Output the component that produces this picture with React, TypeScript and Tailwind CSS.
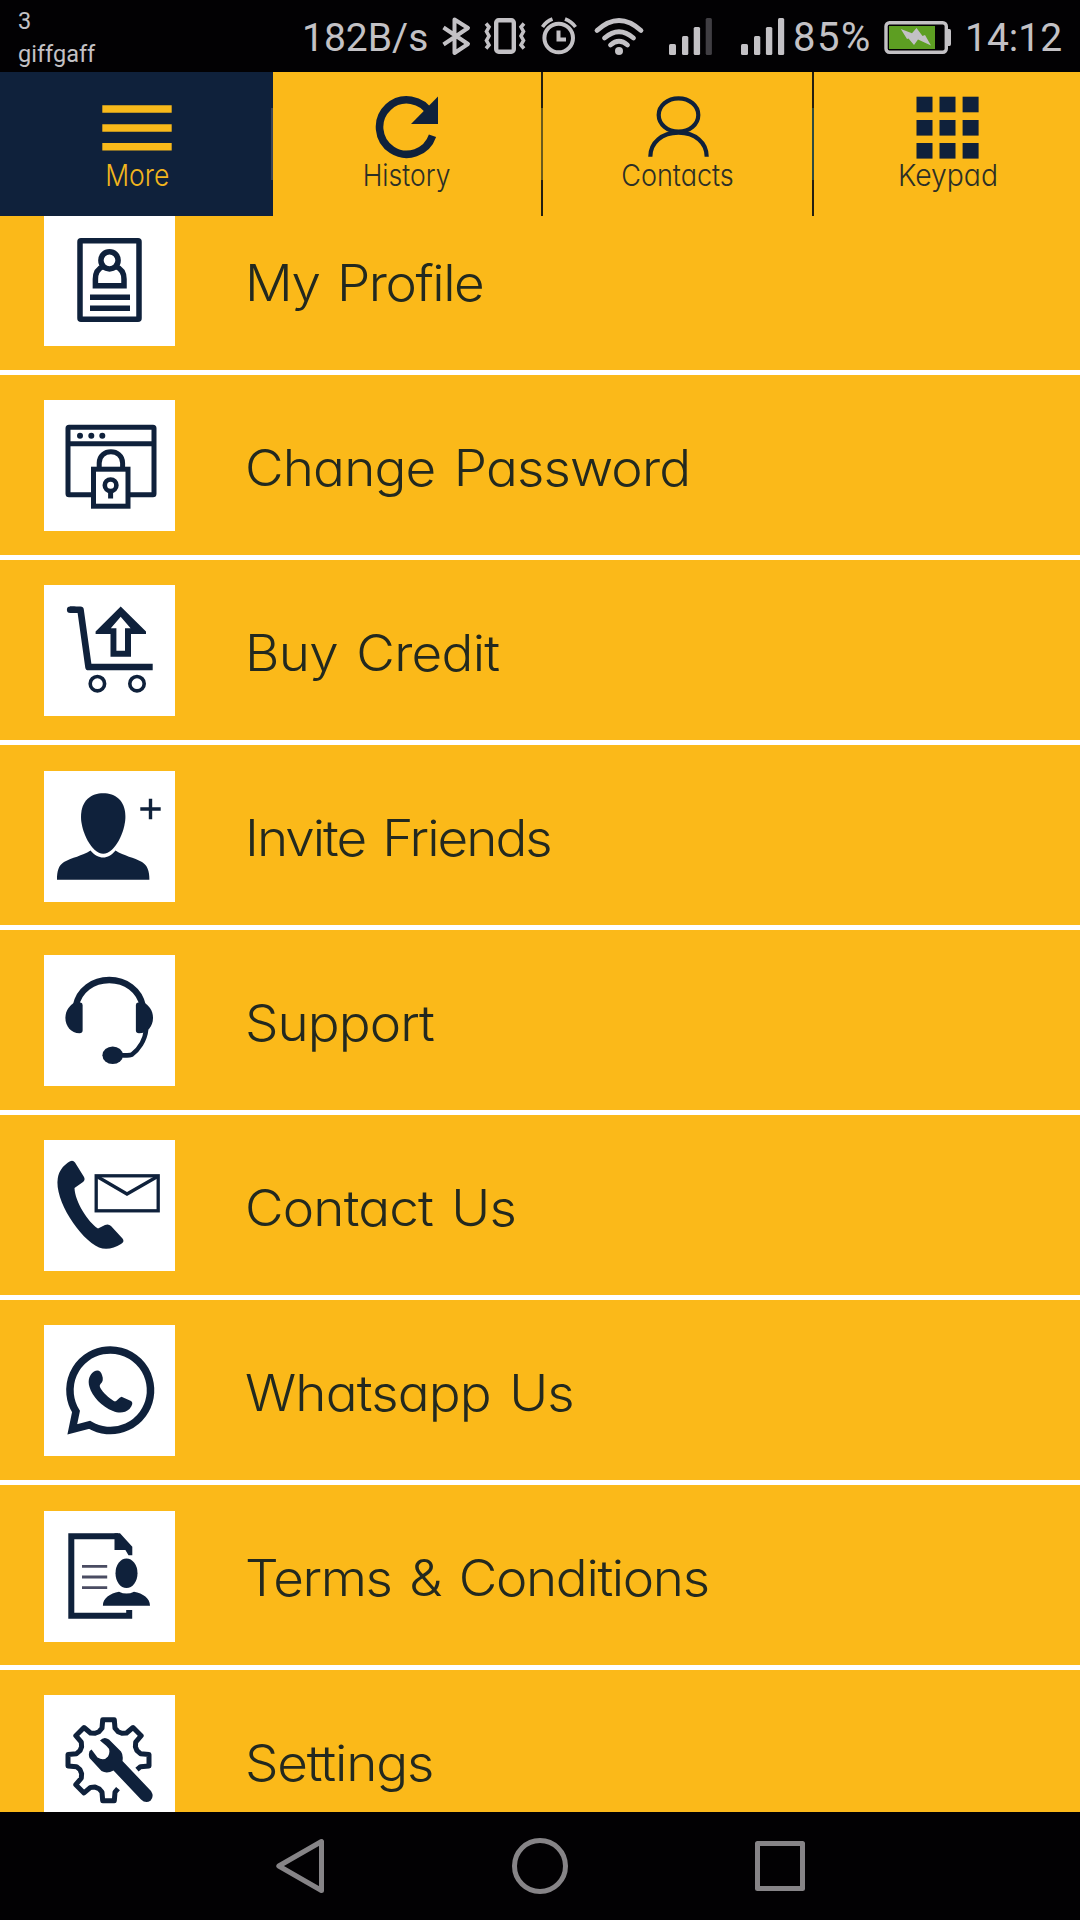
import type { ReactNode } from "react";

const NAVY = "#0f213b";

// Gear outline: one tooth is missing at 45° where the wrench handle goes through
const GEAR_TEETH = [90, 135, 180, 225, 270, 315, 360];
const TOOTH = [[28.5, -9.5], [32, -6.5], [40.5, -5.8], [40.5, 5.8], [32, 6.5], [28.5, 9.5]];
const GEAR_POINTS = GEAR_TEETH.flatMap((deg) => {
    const a = (deg * Math.PI) / 180;
    return TOOTH.map(([x, y]) =>
        `${(64.5 + x * Math.cos(a) - y * Math.sin(a)).toFixed(1)},${(65.2 + x * Math.sin(a) + y * Math.cos(a)).toFixed(1)}`
    );
}).join(" ");

const ICONS: Record<string, ReactNode> = {
    profile: (
        <g fill="none" stroke={NAVY} strokeWidth="5.5">
            <rect x="36" y="25.8" width="59" height="78.5" rx="1"/>
            <circle cx="65.5" cy="45.3" r="8.6"/>
            <path d="M59 51.5C53 54 51.4 58 51.4 64V70.8H80V64C80 58 78 54 72 51.5"/>
            <path d="M46 82.2H86M46 93.2H86"/>
        </g>
    ),
    password: (
        <g fill="none" stroke={NAVY} strokeWidth="5">
            <rect x="24" y="27.2" width="86" height="67.6" rx="1"/>
            <path d="M24 43.7H110"/>
            <g fill={NAVY} stroke="none">
                <circle cx="36" cy="35.7" r="3"/>
                <circle cx="47.3" cy="35.7" r="3"/>
                <circle cx="58.3" cy="35.7" r="3"/>
            </g>
            <rect x="49.5" y="69.2" width="34.5" height="37" fill="white"/>
            <path d="M55.2 68V63C55.2 48 78.6 48 78.6 63V68"/>
            <circle cx="66.6" cy="85.3" r="5.8" strokeWidth="4.6"/>
            <path d="M66.6 90V98.5"/>
        </g>
    ),
    cart: (
        <g fill="none" stroke={NAVY} strokeLinejoin="round">
            <path d="M26 24.8H36.5L44.5 82H108.7" strokeWidth="6.6"/>
            <path d="M26.2 24.8H30" strokeWidth="6.6" strokeLinecap="round"/>
            <circle cx="53.4" cy="98.7" r="7.2" strokeWidth="3.6"/>
            <circle cx="93" cy="98.7" r="7.2" strokeWidth="3.6"/>
            <path fill={NAVY} stroke="none" d="M76.7 21.5L102 46.5V49H87V71.7H66.5V49H51.6V46.5Z"/>
            <path fill="white" stroke="none" d="M76.7 31.8L86.6 43.2H81V65.7H72.4V43.2H66.8Z"/>
        </g>
    ),
    invite: (
        <g fill={NAVY}>
            <path d="M59.2 22.3C71 22.3 81.4 29 81.4 46C81.4 60 71 82.8 59.2 82.8S37 60 37 46C37 29 47.5 22.3 59.2 22.3Z"/>
            <path d="M46.5 79.5C50 84 55 86.6 59.2 86.6S68 84 71.5 79.5C80 85 90 86.5 98 91C103.5 94.5 105.4 100 105.4 108.7H13C13 100 14.5 94.5 20 91C28 86.5 38 85 46.5 79.5Z"/>
            <path d="M96.3 38H116.7M106.5 27.8V48.2" stroke={NAVY} strokeWidth="3.4"/>
        </g>
    ),
    support: (
        <g fill={NAVY}>
            <path d="M31.8 51C35 35 49 25 65.3 25S95.5 35 98.8 51" fill="none" stroke={NAVY} strokeWidth="6.4"/>
            <path d="M31 47.5H36.5Q38.6 47.5 38.6 50V75.5Q38.6 78.3 35.5 78.3C27 78.3 21.4 71 21.4 63S26 50 31 47.5Z"/>
            <path d="M99.5 47.5H94Q91.9 47.5 91.9 50V75.5Q91.9 78.3 95 78.3C103.5 78.3 109 71 109 63S104.5 50 99.5 47.5Z"/>
            <path d="M102.2 74C101 86 94 95 88 99.5Q86.5 100.5 77 100.3" fill="none" stroke={NAVY} strokeWidth="4.6"/>
            <ellipse cx="68.7" cy="100.3" rx="10.3" ry="8.8"/>
        </g>
    ),
    contact: (
        <g fill={NAVY}>
            <path d="M24 22.5Q28.5 18.8 31 22.5L40 37Q41.5 40 39 42L30.5 48C31 62 44 82 54 88.5L61 85Q64.5 83.5 67 86L78.5 98.5Q81 101.5 77 104C70 108.5 62 110 55 107.5C36 99 10 60 13.8 38C15 31 19 26 24 22.5Z"/>
            <g fill="none" stroke={NAVY} strokeWidth="3.3">
                <rect x="52.2" y="35.8" width="62" height="35"/>
                <path d="M53 36.5L83 54L113.5 36.5"/>
            </g>
        </g>
    ),
    whatsapp: (
        <g fill={NAVY}>
            <path d="M32 86.5L28.3 104.3L45.5 99.8A40.3 40.3 0 1 0 32 86.5Z" fill="none" stroke={NAVY} strokeWidth="7.5"/>
            <path d="M50 46.5C54 44 57 46 58 50C59.5 54 59 57 56.5 59C55 61 56 62 57 64C61 70 67 74.5 71 76.5C73 76 75 72.5 77.5 71.7L87 76C89.5 77.5 88 81 85.5 84C81 88 75 88.5 69 86C58 82 48 71 45.5 62C43.5 55 45.5 49.5 50 46.5Z"/>
        </g>
    ),
    terms: (
        <g fill={NAVY}>
            <path d="M85.2 99V104.7H27.3V25.3H74" fill="none" stroke={NAVY} strokeWidth="6"/>
            <path d="M70.5 22.3H76L88.3 35.7V44.3H84.5L81.4 39H70.5Z"/>
            <path d="M38 55.3H63.2M38 66H63.2M38 76.7H63.2" stroke="#4a4c62" strokeWidth="2.8"/>
            <ellipse cx="82.5" cy="62.3" rx="11" ry="14.8"/>
            <path d="M75 80.7Q82.5 84.5 90 80.7C99 82.5 106 87 106 94.7H58.9C58.9 87 66 82.5 75 80.7Z"/>
        </g>
    ),
    settings: (
        <g fill={NAVY}>
            <polyline points={GEAR_POINTS} fill="none" stroke={NAVY} strokeWidth="5" strokeLinejoin="round"/>
            <path d="M56 45.5Q60 41 65 44.5L77 56.5Q79.5 60 78.5 66L107 96Q110.5 101.5 106.5 105.8Q101.5 108.8 97 104.5L69.5 75.5Q63 79 57.5 76L45.5 63Q43.5 56.5 47.5 54.5L53.5 62.5Q60 66.5 64 61.5Q67.5 55 62.5 51Z"/>
        </g>
    ),
};

const MENU = [
    {icon: "profile", label: "My Profile", tile: "", text: "-tracking-[1.4px]"},
    {icon: "password", label: "Change Password", tile: "", text: "-tracking-[0.8px]"},
    {icon: "cart", label: "Buy Credit", tile: "", text: "-tracking-[0.7px]"},
    {icon: "invite", label: "Invite Friends", tile: "mt-[2px]", text: "-tracking-[1.9px]"},
    {icon: "support", label: "Support", tile: "", text: "-tracking-[0.9px]"},
    {icon: "contact", label: "Contact Us", tile: "", text: "-tracking-[0.8px]"},
    {icon: "whatsapp", label: "Whatsapp Us", tile: "", text: "-tracking-[0.8px]"},
    {icon: "terms", label: "Terms & Conditions", tile: "mt-[2px]", text: "-tracking-[1.3px]"},
    {icon: "settings", label: "Settings", tile: "", text: "-tracking-[1.1px]"},
];

function StatusBar() {
    return (
        <header className="flex h-[72px] bg-[#020103] font-['Roboto',sans-serif] text-[#c3c1c5]">
            <div className="w-[302px] pl-[18px] pt-[5px] text-[23.5px] leading-[33px]">
                <p>3</p>
                <p>giffgaff</p>
            </div>
            <p className="w-[138px] pt-[15px] text-[39px] leading-[46px]">182B/s</p>
            <svg width="34" height="72" viewBox="440 0 34 72" fill="none" stroke="currentColor" strokeWidth="4"
                 strokeLinejoin="round">
                <path d="M443.5 27.5L468 44L454.5 53V19.5L468 28L443.5 44.5"/>
            </svg>
            <svg className="ml-[9px]" width="44" height="72" viewBox="483 0 44 72" fill="none" stroke="currentColor"
                 strokeWidth="4.4">
                <rect x="496.2" y="20.2" width="17.6" height="31.6" rx="2.5"/>
                <path strokeWidth="3.6" d="M486 23.5L489 27L486.5 31.5L489 36L486.5 40.5L489 45L486 48.5M524 23.5L521 27L523.5 31.5L521 36L523.5 40.5L521 45L524 48.5"/>
            </svg>
            <svg className="ml-[13px]" width="38" height="72" viewBox="540 0 38 72" fill="none" stroke="currentColor"
                 strokeWidth="4">
                <circle cx="558.7" cy="38" r="14.3"/>
                <path d="M558.5 30.5V39.5H566"/>
                <path strokeWidth="3.6" d="M542.5 27Q546 21.5 552.5 19M565 19Q571.5 21.5 575.5 27"/>
            </svg>
            <svg className="ml-[14px]" width="54" height="72" viewBox="592 0 54 72" fill="none" stroke="currentColor"
                 strokeWidth="4.8" strokeLinecap="round">
                <path d="M597 30.5Q619 10.5 641 30.5M604.5 38Q619 25.5 633.5 38M610.5 45Q619 37.5 627.5 45"/>
                <circle cx="619" cy="51" r="4" fill="currentColor" stroke="none"/>
            </svg>
            <svg className="ml-[22px]" width="45" height="72" viewBox="668 0 45 72" fill="currentColor">
                <rect x="669" y="44" width="7" height="11" rx="1.5"/>
                <rect x="682" y="36" width="6.3" height="19" rx="1.5"/>
                <rect x="693.7" y="27" width="6.4" height="28" rx="1.5"/>
                <rect x="705.7" y="18" width="6.2" height="37" rx="1.5" fill="#403e43"/>
            </svg>
            <svg className="ml-[27px]" width="45" height="72" viewBox="740 0 45 72" fill="currentColor">
                <rect x="741" y="44" width="7" height="11" rx="1.5"/>
                <rect x="754" y="36" width="6.3" height="19" rx="1.5"/>
                <rect x="765.9" y="27" width="6.4" height="28" rx="1.5"/>
                <rect x="778" y="18" width="6.2" height="37" rx="1.5"/>
            </svg>
            <p className="ml-[8px] w-[89px] pt-[15px] text-[40px] leading-[46px] tracking-[1.5px]">85%</p>
            <svg width="71" height="72" viewBox="882 0 71 72" fill="currentColor">
                <rect x="886" y="22.7" width="60.3" height="29.6" rx="3.5" fill="none" stroke="currentColor"
                      strokeWidth="3.4"/>
                <rect x="889" y="26" width="46" height="23" fill="#5d9e22"/>
                <path d="M948 29H949.5Q951 29 951 31V44Q951 46 949.5 46H948Z"/>
                <path d="M900.8 29L912 33.3L916.5 28L922.5 36L925 35L931 45.6L918 39.5L914 45L908.5 38.5L907 39Z"/>
            </svg>
            <p className="ml-[12px] pt-[15px] text-[39px] leading-[46px]">14:12</p>
        </header>
    );
}

function Tab({label, className, labelClass, children}: {
    label: string;
    className: string;
    labelClass: string;
    children: ReactNode;
}) {
    return (
        <button className={`flex flex-col items-center pt-[24px] ${className}`}>
            <svg width="72" height="63" viewBox="0 0 72 63">{children}</svg>
            <span className={`mt-px text-[30px] leading-[30px] ${labelClass}`}>{label}</span>
        </button>
    );
}

function Divider({mid}: { mid: string }) {
    return (
        <div className="flex w-[2px] flex-col bg-[#241f10]">
            <div className={`mt-[36px] h-[72px] ${mid}`}/>
        </div>
    );
}

function TabBar() {
    return (
        <nav className="flex h-[144px] bg-[#fbb919] font-[350] text-[#2c2f26]">
            <Tab label="More" className="w-[271px] bg-[#0f213b] pl-[3px] text-[#f2b51d]" labelClass="scale-x-[0.885]">
                <path d="M1.3 13H70.7M1.3 32H70.7M1.3 50.8H70.7" stroke="#f8b91a" strokeWidth="7.6"/>
            </Tab>
            <div className="flex w-[2px] flex-col bg-[#0f213b]">
                <div className="mt-[36px] h-[72px] bg-[#3a4557]"/>
            </div>
            <Tab label="History" className="w-[268px]" labelClass="scale-x-[0.885]">
                <path d="M61.5 39.8A27.2 27.2 0 1 1 59.6 18" fill="none" stroke={NAVY} strokeWidth="7.6"/>
                <path d="M67 0.5V28H40Z" fill={NAVY}/>
            </Tab>
            <Divider mid="bg-[#6b5a1c]"/>
            <Tab label="Contacts" className="w-[269px]" labelClass="scale-x-[0.9]">
                <g fill="none" stroke={NAVY} strokeWidth="4.2">
                    <ellipse cx="36.5" cy="19" rx="19.8" ry="16.7"/>
                    <path d="M8.3 60.8C8.3 46.5 20 36.7 36.5 36.7S64.7 46.5 64.7 60.8"/>
                </g>
            </Tab>
            <Divider mid="bg-[#2f4a40]"/>
            <Tab label="Keypad" className="w-[266px] pl-[2px]" labelClass="scale-x-[0.945]">
                {[0.7, 24, 47].map((y) => [4.5, 27.5, 50.6].map((x) => (
                    <rect key={`${x}-${y}`} x={x} y={y} width="16" height="15.6" fill={NAVY}/>
                )))}
            </Tab>
        </nav>
    );
}

export default function App() {
    return (
        <div className="flex h-[1920px] w-[1080px] flex-col overflow-hidden bg-[#020103] font-['Inter',sans-serif] [font-feature-settings:'cv11']">
            <StatusBar/>
            <TabBar/>

            <main className="h-[1596px] overflow-hidden bg-[#fbb919]">
                {/* list is scrolled a little, first row slides under the tabs */}
                <ul className="-mt-[26px]">
                    {MENU.map(({icon, label, tile, text}) => (
                        <li key={icon} className="flex h-[185px] items-center border-b-[5px] border-white pl-[44px]">
                            <svg className={`bg-white ${tile}`} width="131" height="131" viewBox="0 0 131 131">
                                {ICONS[icon]}
                            </svg>
                            <span className={`ml-[70px] mt-[5px] origin-left scale-x-[1.06] text-[50px] font-[350] leading-[60px] text-[#23291f] [word-spacing:4px] ${text}`}>
                                {label}
                            </span>
                        </li>
                    ))}
                </ul>
            </main>

            <footer className="flex h-[108px] items-center pl-[276px]">
                <svg width="529" height="56" viewBox="276 0 529 56" fill="none" stroke="#868487" strokeWidth="5"
                     strokeLinejoin="round">
                    <path d="M278.8 28L321.5 3.5V52.5Z"/>
                    <circle cx="540" cy="28" r="25.5"/>
                    <rect x="757.5" y="5.5" width="45" height="45"/>
                </svg>
            </footer>
        </div>
    );
}
